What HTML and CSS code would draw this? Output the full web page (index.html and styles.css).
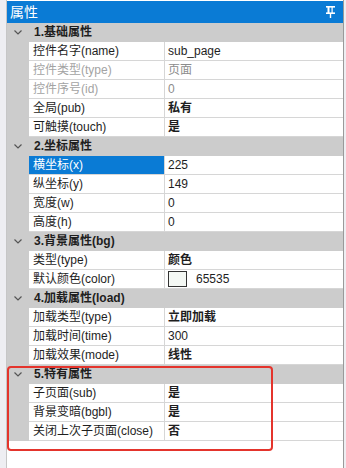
FILE: index.html
```html
<!DOCTYPE html>
<html lang="zh">
<head>
    <meta charset="UTF-8">
    <title>属性</title>
    <link rel="stylesheet" href="styles.css">
</head>
<body>
    <div class="panel">
        <div class="titlebar">
            <span class="title">属性</span>
            <svg class="pin" width="9" height="12" viewBox="0 0 9 12">
                <rect x="0" y="0" width="9" height="1.6" fill="#fff"/>
                <rect x="1.5" y="1" width="2" height="6" fill="#fff"/>
                <rect x="5.5" y="1" width="1.2" height="6" fill="#fff"/>
                <rect x="0" y="6.4" width="9" height="1.6" fill="#fff"/>
                <rect x="3.8" y="7.5" width="1.4" height="4.5" fill="#fff"/>
            </svg>
        </div>

        <div class="grid">
            <!-- 1.基础属性 -->
            <div class="cat"><span class="chev"><svg width="8" height="5" viewBox="0 0 8 5"><polyline points="0.5,0.5 4,4 7.5,0.5" fill="none" stroke="#555" stroke-width="1.2"/></svg></span><span class="cat-name">1.基础属性</span></div>
            <div class="row"><div class="gut"></div><div class="name">控件名字(name)</div><div class="value">sub_page</div></div>
            <div class="row off"><div class="gut"></div><div class="name">控件类型(type)</div><div class="value">页面</div></div>
            <div class="row off"><div class="gut"></div><div class="name">控件序号(id)</div><div class="value">0</div></div>
            <div class="row"><div class="gut"></div><div class="name">全局(pub)</div><div class="value bold">私有</div></div>
            <div class="row"><div class="gut"></div><div class="name">可触摸(touch)</div><div class="value bold">是</div></div>

            <!-- 2.坐标属性 -->
            <div class="cat"><span class="chev"><svg width="8" height="5" viewBox="0 0 8 5"><polyline points="0.5,0.5 4,4 7.5,0.5" fill="none" stroke="#555" stroke-width="1.2"/></svg></span><span class="cat-name">2.坐标属性</span></div>
            <div class="row sel"><div class="gut"></div><div class="name">横坐标(x)</div><div class="value">225</div></div>
            <div class="row"><div class="gut"></div><div class="name">纵坐标(y)</div><div class="value">149</div></div>
            <div class="row"><div class="gut"></div><div class="name">宽度(w)</div><div class="value">0</div></div>
            <div class="row"><div class="gut"></div><div class="name">高度(h)</div><div class="value">0</div></div>

            <!-- 3.背景属性 -->
            <div class="cat"><span class="chev"><svg width="8" height="5" viewBox="0 0 8 5"><polyline points="0.5,0.5 4,4 7.5,0.5" fill="none" stroke="#555" stroke-width="1.2"/></svg></span><span class="cat-name">3.背景属性(bg)</span></div>
            <div class="row"><div class="gut"></div><div class="name">类型(type)</div><div class="value bold">颜色</div></div>
            <div class="row"><div class="gut"></div><div class="name">默认颜色(color)</div><div class="value"><span class="swatch"></span>65535</div></div>

            <!-- 4.加载属性 -->
            <div class="cat"><span class="chev"><svg width="8" height="5" viewBox="0 0 8 5"><polyline points="0.5,0.5 4,4 7.5,0.5" fill="none" stroke="#555" stroke-width="1.2"/></svg></span><span class="cat-name">4.加载属性(load)</span></div>
            <div class="row"><div class="gut"></div><div class="name">加载类型(type)</div><div class="value bold">立即加载</div></div>
            <div class="row"><div class="gut"></div><div class="name">加载时间(time)</div><div class="value">300</div></div>
            <div class="row"><div class="gut"></div><div class="name">加载效果(mode)</div><div class="value bold">线性</div></div>

            <!-- 5.特有属性 -->
            <div class="cat"><span class="chev"><svg width="8" height="5" viewBox="0 0 8 5"><polyline points="0.5,0.5 4,4 7.5,0.5" fill="none" stroke="#555" stroke-width="1.2"/></svg></span><span class="cat-name">5.特有属性</span></div>
            <div class="row"><div class="gut"></div><div class="name">子页面(sub)</div><div class="value bold">是</div></div>
            <div class="row"><div class="gut"></div><div class="name">背景变暗(bgbl)</div><div class="value bold">是</div></div>
            <div class="row"><div class="gut"></div><div class="name">关闭上次子页面(close)</div><div class="value bold">否</div></div>
        </div>

        <div class="highlight"></div>
    </div>
</body>
</html>
```

FILE: styles.css
```css
body {
    margin: 0;
    background: #eeeef2;
    font-family: "Liberation Sans", "Noto Sans CJK SC", sans-serif;
    font-size: 12px;
    color: #1e1e1e;
    height: 468px;
    overflow: hidden;
}

.panel {
    position: relative;
    margin-left: 6px;
    margin-right: 2px;
    padding-top: 1px;
    height: 467px;
    background: #fff;
    border-left: 1px solid #c6c6c6;
    border-right: 1px solid #9a9a9a;
}

.titlebar {
    height: 22px;
    background: #0a7bd5;
    color: #fff;
    display: flex;
    align-items: center;
    justify-content: space-between;
    padding: 0 8px 0 3px;
}

.title {
    font-size: 14px;
    line-height: 22px;
}

.pin {
    display: block;
}

.cat {
    height: 19px;
    background: #cccccc;
    display: flex;
    align-items: center;
    font-weight: bold;
    line-height: 19px;
}

.chev {
    width: 22px;
    display: flex;
    justify-content: center;
    padding-right: 1px;
}

.cat-name {
    padding-left: 4px;
}

.row {
    display: grid;
    grid-template-columns: 22px 136px 1fr;
    height: 19px;
}

.gut {
    background: #cccccc;
}

.name, .value {
    line-height: 18px;
    border-bottom: 1px solid #d6d6d6;
    white-space: nowrap;
    overflow: hidden;
    display: flex;
    align-items: center;
}

.name {
    padding-left: 4px;
    border-right: 1px solid #d6d6d6;
}

.value {
    padding-left: 3px;
}

.bold {
    font-weight: bold;
}

.off .name {
    color: #a3a3a3;
}

.off .value {
    color: #8c8c8c;
}

.sel .name {
    background: #0a7bd5;
    color: #fff;
}

.swatch {
    display: inline-block;
    width: 17px;
    height: 14px;
    border: 1px solid #333;
    background: #f4f8f4;
    margin: 0 9px 0 0;
}

.highlight {
    position: absolute;
    left: 0;
    top: 366px;
    width: 262px;
    height: 81px;
    border: 2px solid #e4342c;
    border-radius: 4px;
}
```
